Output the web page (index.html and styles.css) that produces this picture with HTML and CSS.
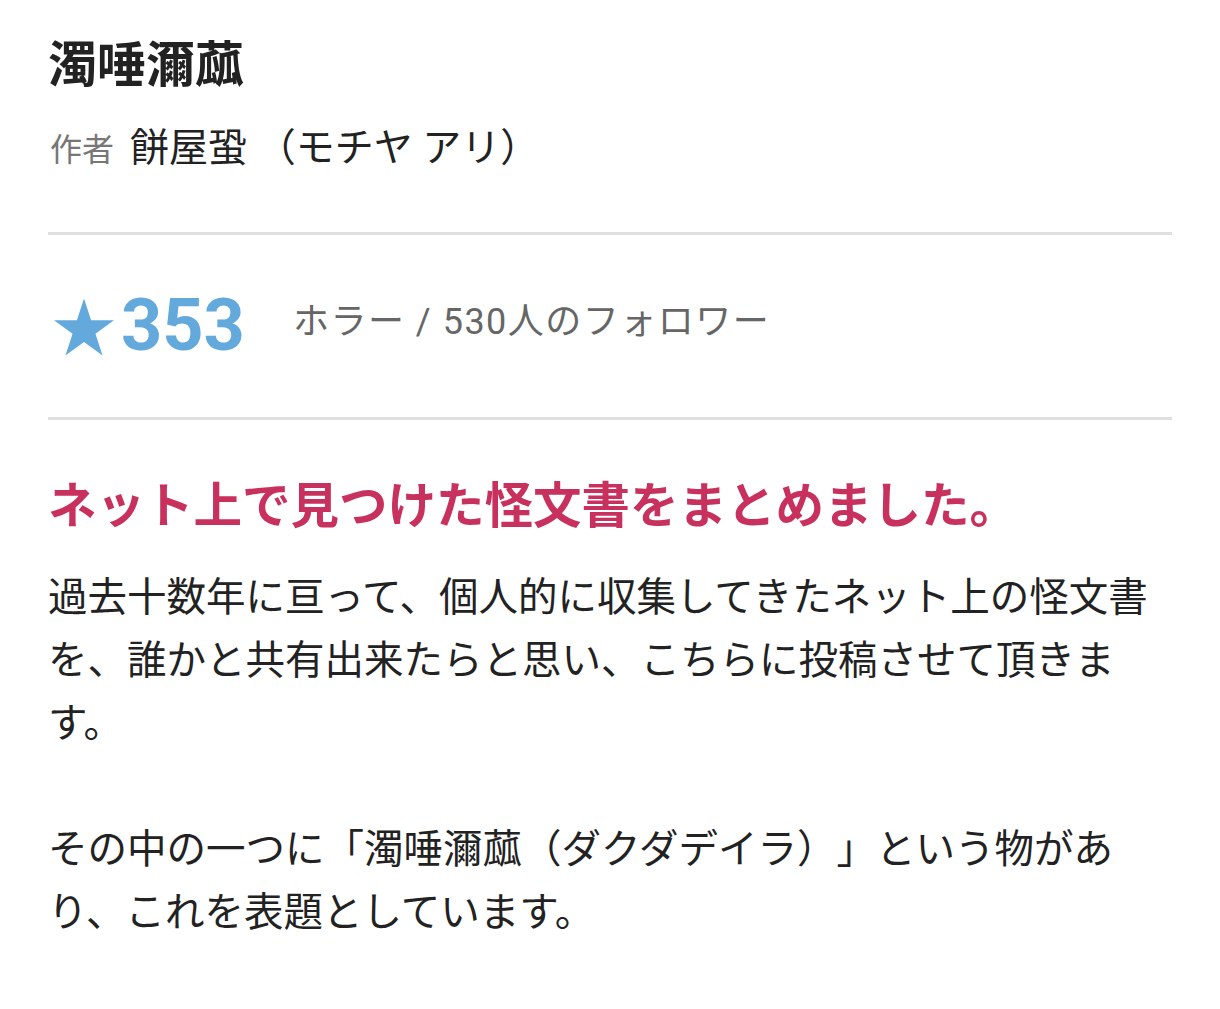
FILE: index.html
```html
<!DOCTYPE html>
<html lang="ja">
<head>
<meta charset="utf-8">
<title>濁唾濔蓏</title>
<link rel="stylesheet" href="styles.css">
</head>
<body>
<main class="work">
  <h1 class="work-title">濁唾濔蓏</h1>
  <p class="work-author"><span class="author-label">作者</span><span class="author-name">餅屋蛩 （モチヤ アリ）</span></p>
  <div class="work-stats">
    <span class="stars"><svg class="star-icon" viewBox="0 0 100 95" width="60" height="58" aria-hidden="true"><polygon points="50,0 61.8,36.3 100,36.3 69.1,58.8 80.9,95.1 50,72.6 19.1,95.1 30.9,58.8 0,36.3 38.2,36.3"/></svg><span class="star-count">353</span></span>
    <span class="stats-meta">ホラー / 530人のフォロワー</span>
  </div>
  <h2 class="catchphrase">ネット上で見つけた怪文書をまとめました。</h2>
  <p class="introduction">過去十数年に亘って、個人的に収集してきたネット上の怪文書を、誰かと共有出来たらと思い、こちらに投稿させて頂きます。<br><br>その中の一つに「濁唾濔蓏（ダクダデイラ）」という物があり、これを表題としています。</p>
</main>
</body>
</html>
```

FILE: styles.css
```css
html, body {
  margin: 0;
  padding: 0;
  background: #fff;
}

body {
  font-family: Roboto, "Noto Sans CJK JP", "Noto Sans", sans-serif;
  color: #222;
  text-spacing-trim: space-all;
}

.work {
  padding: 0 48px;
}

.work-title {
  margin: 31px 0 0;
  font-size: 49px;
  line-height: 70px;
  font-weight: 700;
  color: #222;
}

.work-author {
  margin: 19px 0 0;
  line-height: 56px;
  display: flex;
  align-items: baseline;
}

.author-label {
  font-size: 32px;
  color: #777;
  padding-left: 2px;
  margin-right: 16px;
}

.author-name {
  font-size: 39px;
  color: #222;
  white-space: pre;
}

.work-stats {
  margin-top: 54px;
  border-top: 3px solid #e0e0e0;
  border-bottom: 3px solid #e0e0e0;
  padding: 51px 0;
  height: 80px;
  display: flex;
  align-items: center;
}

.stars {
  display: flex;
  align-items: flex-end;
  color: #64a9dc;
}

.star-icon {
  fill: #64a9dc;
  display: block;
  margin-left: 6px;
  margin-bottom: 6px;
}

.star-count {
  font-family: Roboto, "Liberation Sans", sans-serif;
  font-weight: 700;
  font-size: 72px;
  line-height: 72px;
  margin-left: 7px;
}

.stats-meta {
  margin-left: 48px;
  margin-bottom: 16px;
  font-size: 36px;
  color: #666;
  letter-spacing: 1.5px;
}

.catchphrase {
  margin: 54px 0 0;
  font-size: 48.5px;
  line-height: 66px;
  font-weight: 700;
  color: #c8305e;
}

.introduction {
  margin: 25.5px 0 0;
  font-size: 39.5px;
  line-height: 63px;
  color: #222;
}
```
